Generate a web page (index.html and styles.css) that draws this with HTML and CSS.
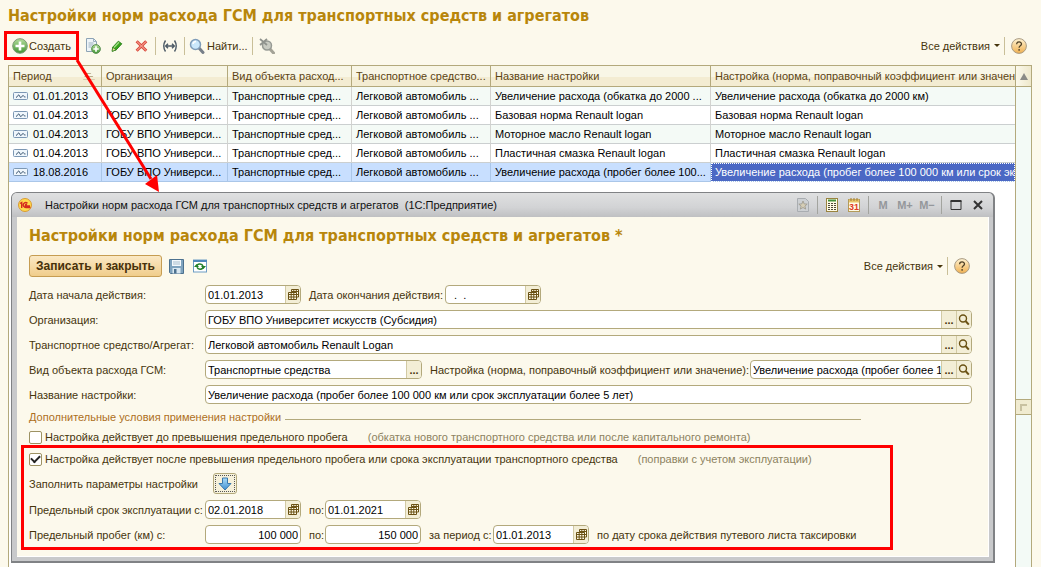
FILE: index.html
```html
<!DOCTYPE html>
<html lang="ru">
<head>
<meta charset="utf-8">
<title>Настройки норм расхода ГСМ</title>
<link rel="stylesheet" href="styles.css">
</head>
<body>
<svg class="sprite" aria-hidden="true">
  <defs>
    <linearGradient id="gGreen" x1="0" y1="0" x2="0" y2="1"><stop offset="0" stop-color="#b5dd9c"/><stop offset="1" stop-color="#3f9433"/></linearGradient>
    <linearGradient id="gGold" x1="0" y1="0" x2="0" y2="1"><stop offset="0" stop-color="#fff3d2"/><stop offset="1" stop-color="#f0b050"/></linearGradient>
    <linearGradient id="gBlue" x1="0" y1="0" x2="0" y2="1"><stop offset="0" stop-color="#a9dcf8"/><stop offset="1" stop-color="#3f8fd0"/></linearGradient>
  </defs>
  <symbol id="i-add" viewBox="0 0 16 16"><circle cx="8" cy="8" r="7.3" fill="url(#gGreen)" stroke="#7c9a74"/><path d="M8 3.5v9M3.5 8h9" stroke="#fff" stroke-width="2.6"/></symbol>
  <symbol id="i-copy" viewBox="0 0 16 16"><path d="M1.5.5h7l3 3v10h-10z" fill="#eef4f8" stroke="#8da3b5"/><path d="M8.500.5v3h3M3.500 5h5M3.500 7h5M3.500 9h3" fill="none" stroke="#9db1c1"/><circle cx="11" cy="11" r="4.4" fill="url(#gGreen)" stroke="#5f9257"/><path d="M11 8.300v5.400M8.300 11h5.400" stroke="#fff" stroke-width="1.700"/></symbol>
  <symbol id="i-pencil" viewBox="0 0 16 16"><path d="M3 9.500 9.500 2.500l4 3L7 12.500 2.500 14z" fill="#3aa51d" stroke="#207812"/><path d="M4.500 9.700 10.300 3.700" stroke="#a5e08a" stroke-width="1.400"/><path d="m3 9.500 4 3L2.500 14z" fill="#eadb9e" stroke="#207812" stroke-width=".7"/></symbol>
  <symbol id="i-del" viewBox="0 0 16 16"><path d="m3 2.500 11 11M14 2.500 3 13.500" stroke="#d9473a" stroke-width="3.400"/><path d="m3.400 2.900 10.200 10.200M13.600 2.900 3.400 13.100" stroke="#f49a8b" stroke-width="1.200"/></symbol>
  <symbol id="i-period" viewBox="0 0 16 16"><path d="M3.500 2.500q-3.500 5.500 0 11M12.500 2.500q3.500 5.500 0 11M4 8h8M6 5.800 3.700 8 6 10.200M10 5.800 12.300 8 10 10.200" fill="none" stroke="#4c5a66" stroke-width="1.400"/></symbol>
  <symbol id="i-find" viewBox="0 0 16 16"><path d="m10 10 4 4.500" stroke="#777f89" stroke-width="3" stroke-linecap="round"/><circle cx="6.500" cy="6.500" r="5" fill="#cbe8fb" stroke="#7f9cb8" stroke-width="1.500"/><path d="M4 6a3 3 0 0 1 3-2.500" fill="none" stroke="#fff" stroke-width="1.400"/></symbol>
  <symbol id="i-unfind" viewBox="0 0 16 16"><path d="m11 11 3.500 4" stroke="#a4a397" stroke-width="3" stroke-linecap="round"/><circle cx="8" cy="7.500" r="4.500" fill="#c9cbc2" stroke="#969a94" stroke-width="1.500"/><path d="m1 1 7 6M8 1 1 7" stroke="#8f928d" stroke-width="1.700"/></symbol>
  <symbol id="i-help" viewBox="0 0 16 16"><circle cx="8" cy="8" r="7.400" fill="url(#gGold)" stroke="#a99b83"/><path d="M5.600 6.300c0-3.100 4.900-3.100 4.900-.3 0 1.900-2.400 1.700-2.400 3.700M8.100 11v1.700" fill="none" stroke="#4f4127" stroke-width="1.300"/></symbol>
  <symbol id="i-rec" viewBox="0 0 16 10"><rect x=".5" y="1.500" width="14" height="7" rx="1" fill="#eff6fc" stroke="#7c97b4"/><path d="M3 6.500c1.300 0 1.500-2.500 2.700-2.500s.8 2.500 2 2.500S9 4.500 10 4.500 11 6.500 12.500 6" fill="none" stroke="#38536f"/></symbol>
  <symbol id="i-cal" viewBox="0 0 11 11"><path d="M4.500.5h6v8h-2v2h-8v-7h4z" fill="#fffbe8"/><path d="M3.500 2.500v-2h7v7.500h-2M.5 3.500h8v7h-8zM3.200 2.500h7.300M.5 5.500h10M.5 8h8M3.200 3.500v7M5.800.5v10M8.300.5v3" fill="none" stroke="#6b5214"/></symbol>
  <symbol id="i-lens" viewBox="0 0 12 12"><circle cx="5" cy="4.500" r="3.500" fill="none" stroke="#6b5214" stroke-width="1.400"/><path d="m7.500 7 3.300 3.700" stroke="#6b5214" stroke-width="2"/></symbol>
  <symbol id="i-save" viewBox="0 0 15 15"><path d="M.5.500h14v14H1.500l-1-1z" fill="#7fa3be" stroke="#4c718f"/><path d="M3 1h9v6H3z" fill="#f4f9fc"/><path d="M4 3h7M4 5h7" stroke="#a8bdcc"/><path d="M3.500 9h8v5.500h-8z" fill="#dae8f1"/><path d="M5 10h2.500v4.500H5z" fill="#4c718f"/></symbol>
  <symbol id="i-refresh" viewBox="0 0 14 13"><rect x=".5" y=".5" width="13" height="12" fill="#fff" stroke="#6d9dc4"/><path d="M0 1.500h14" stroke="#4e88ba" stroke-width="2"/><path d="M3.500 7C4 3.800 9 3.500 10 6.500M10.500 7c-.6 3.300-5.500 3.500-6.500.7" fill="none" stroke="#23802a" stroke-width="1.500"/><path d="M1 7.500h5L3.500 4.500zM8 6.500h5l-2.500 3z" fill="#23802a"/></symbol>
  <symbol id="i-down" viewBox="0 0 14 14"><path d="M4.500 1h5v5.500H13L7 13 1 6.500h3.500z" fill="url(#gBlue)" stroke="#3a78ac"/></symbol>
  <symbol id="i-star" viewBox="0 0 12 14"><path d="M.5.500h8l3 3v10H.5z" fill="#cdd0d3" stroke="#a9adb1"/><path d="m6 3 1.200 2.900 3 .2-2.300 2 .8 3L6 9.500l-2.700 1.600.8-3-2.300-2 3-.2z" fill="#d5cdb5" stroke="#9b978b" stroke-width=".8"/></symbol>
  <symbol id="i-calc" viewBox="0 0 12 14"><rect x=".5" y=".5" width="11" height="13" fill="#fffbe6" stroke="#99833f"/><path d="M2 2.500h8" stroke="#43903a" stroke-width="2"/><path d="M2 5.500h8M2 7.500h8M2 9.500h8M2 11.500h8" stroke="#4e4a38" stroke-dasharray="2 1"/></symbol>
  <symbol id="i-logo" viewBox="0 0 14 14"><circle cx="7" cy="7" r="6.500" fill="#ffd94c" stroke="#d89a35"/><path d="M2 5.500 3.700 4.500V10M9.500 5.300C7.500 3.500 5 5 5.200 7.300 5.400 9.300 7 9.700 12.500 9.500M9 6.700C7.500 5.800 6.600 7.900 8 8h4" fill="none" stroke="#d42a1f" stroke-width="1.400"/></symbol>
</svg>

<main class="page">
  <h1 class="title">Настройки норм расхода ГСМ для транспортных средств и агрегатов</h1>
  <div class="toolbar">
    <button class="tool create"><svg class="ic16"><use href="#i-add"/></svg>Создать</button>
    <button class="tool" aria-label="Скопировать"><svg class="ic16"><use href="#i-copy"/></svg></button>
    <button class="tool" aria-label="Изменить"><svg class="ic14"><use href="#i-pencil"/></svg></button>
    <button class="tool" aria-label="Удалить"><svg class="ic14"><use href="#i-del"/></svg></button>
    <span class="sep"></span>
    <button class="tool" aria-label="Период"><svg class="ic16"><use href="#i-period"/></svg></button>
    <span class="sep"></span>
    <button class="tool"><svg class="ic16"><use href="#i-find"/></svg>Найти...</button>
    <span class="sep"></span>
    <button class="tool" aria-label="Отменить поиск"><svg class="ic16"><use href="#i-unfind"/></svg></button>
    <button class="tool actions">Все действия<span class="caret"></span></button>
    <span class="sep"></span>
    <button class="tool help" aria-label="Справка"><svg class="ic16"><use href="#i-help"/></svg></button>
  </div>

  <div class="list">
    <div class="list-body">
      <table class="grid">
        <colgroup><col class="c1"><col class="c2"><col class="c3"><col class="c4"><col class="c5"><col></colgroup>
        <thead><tr><th><span class="sorted">Период<span class="sort"></span></span></th><th>Организация</th><th>Вид объекта расход...</th><th>Транспортное средство...</th><th>Название настройки</th><th>Настройка (норма, поправочный коэффициент или значение)</th></tr></thead>
        <tbody>
          <tr><td><svg class="rec"><use href="#i-rec"/></svg>01.01.2013</td><td>ГОБУ ВПО Универси...</td><td>Транспортные сред...</td><td>Легковой автомобиль ...</td><td>Увеличение расхода (обкатка до 2000 ...</td><td>Увеличение расхода (обкатка до 2000 км)</td></tr>
          <tr><td><svg class="rec"><use href="#i-rec"/></svg>01.04.2013</td><td>ГОБУ ВПО Универси...</td><td>Транспортные сред...</td><td>Легковой автомобиль ...</td><td>Базовая норма Renault logan</td><td>Базовая норма Renault logan</td></tr>
          <tr><td><svg class="rec"><use href="#i-rec"/></svg>01.04.2013</td><td>ГОБУ ВПО Универси...</td><td>Транспортные сред...</td><td>Легковой автомобиль ...</td><td>Моторное масло Renault logan</td><td>Моторное масло Renault logan</td></tr>
          <tr><td><svg class="rec"><use href="#i-rec"/></svg>01.04.2013</td><td>ГОБУ ВПО Универси...</td><td>Транспортные сред...</td><td>Легковой автомобиль ...</td><td>Пластичная смазка Renault logan</td><td>Пластичная смазка Renault logan</td></tr>
          <tr class="selected"><td><svg class="rec"><use href="#i-rec"/></svg>18.08.2016</td><td>ГОБУ ВПО Универси...</td><td>Транспортные сред...</td><td>Легковой автомобиль ...</td><td>Увеличение расхода (пробег более 100...</td><td class="current">Увеличение расхода (пробег более 100 000 км или срок эксплуатации более 5 лет)</td></tr>
        </tbody>
      </table>
    </div>
    <div class="scroll"><span class="scroll-up"></span><span class="thumb"></span></div>
  </div>
</main>

<svg class="arrow" viewBox="0 0 90 140" aria-hidden="true"><path d="M5 5 79 124" stroke="#f00" stroke-width="3"/><path d="m87 137-14-8 12-9z" fill="#f00"/></svg>

<section class="window">
  <header class="window-bar">
    <svg class="ic14"><use href="#i-logo"/></svg>
    <span class="window-name">Настройки норм расхода ГСМ для транспортных средств и агрегатов&nbsp; (1С:Предприятие)</span>
    <button class="wb" aria-label="Избранное"><svg class="ic1214"><use href="#i-star"/></svg></button>
    <span class="sep"></span>
    <button class="wb" aria-label="Калькулятор"><svg class="ic1214"><use href="#i-calc"/></svg></button>
    <button class="wb" aria-label="Календарь"><svg class="ic1214" viewBox="0 0 12 14"><rect x=".5" y="1.500" width="11" height="12" fill="#fffbe6" stroke="#b39b5a"/><path d="M1 3h10" stroke="#e8c46a" stroke-width="3"/><path d="M3 0v3M6 0v3M9 0v3" stroke="#a07a2c"/><text x="6" y="12" class="date-num">31</text></svg></button>
    <span class="sep"></span>
    <button class="wb mem">M</button><button class="wb mem">M+</button><button class="wb mem">M−</button>
    <span class="sep"></span>
    <button class="wb" aria-label="Развернуть"><svg class="ic12" viewBox="0 0 12 12"><path d="M1 2h10v8.500H1z" fill="none" stroke="#333"/><path d="M.5 2h11" stroke="#333" stroke-width="2"/></svg></button>
    <button class="wb" aria-label="Закрыть"><svg class="ic12" viewBox="0 0 12 12"><path d="m2 2 8 8M10 2l-8 8" stroke="#333" stroke-width="2"/></svg></button>
  </header>
  <form class="form">
    <h2 class="title">Настройки норм расхода ГСМ для транспортных средств и агрегатов *</h2>
    <div class="form-bar">
      <button type="button" class="primary">Записать и закрыть</button>
      <button type="button" class="tool" aria-label="Записать"><svg class="ic15"><use href="#i-save"/></svg></button>
      <button type="button" class="tool" aria-label="Обновить"><svg class="ic14"><use href="#i-refresh"/></svg></button>
      <button type="button" class="tool actions">Все действия<span class="caret"></span></button>
      <span class="sep"></span>
      <button type="button" class="tool" aria-label="Справка"><svg class="ic16"><use href="#i-help"/></svg></button>
    </div>
    <div class="rows">
      <div class="row">
        <label class="lead" for="d1">Дата начала действия:</label>
        <span class="field date"><input id="d1" value="01.01.2013"><button type="button" aria-label="Календарь"><svg class="ic11"><use href="#i-cal"/></svg></button></span>
        <label class="mid w-end" for="d2">Дата окончания действия:</label>
        <span class="field date"><input id="d2" value="  .  ."><button type="button" aria-label="Календарь"><svg class="ic11"><use href="#i-cal"/></svg></button></span>
      </div>
      <div class="row">
        <label class="lead" for="org">Организация:</label>
        <span class="field wide"><input id="org" value="ГОБУ ВПО Университет искусств (Субсидия)"><button type="button" class="dots">...</button><button type="button" aria-label="Открыть"><svg class="ic12"><use href="#i-lens"/></svg></button></span>
      </div>
      <div class="row">
        <label class="lead" for="car">Транспортное средство/Агрегат:</label>
        <span class="field wide"><input id="car" value="Легковой автомобиль Renault Logan"><button type="button" class="dots">...</button><button type="button" aria-label="Открыть"><svg class="ic12"><use href="#i-lens"/></svg></button></span>
      </div>
      <div class="row">
        <label class="lead" for="kind">Вид объекта расхода ГСМ:</label>
        <span class="field kind"><input id="kind" value="Транспортные средства"><button type="button" class="dots">...</button></span>
        <label class="mid w-set" for="set">Настройка (норма, поправочный коэффициент или значение):</label>
        <span class="field wide"><input id="set" value="Увеличение расхода (пробег более 100 000 км или срок эксплуатации более 5 лет)"><button type="button" class="dots">...</button><button type="button" aria-label="Открыть"><svg class="ic12"><use href="#i-lens"/></svg></button></span>
      </div>
      <div class="row">
        <label class="lead" for="nm">Название настройки:</label>
        <span class="field wide"><input id="nm" value="Увеличение расхода (пробег более 100 000 км или срок эксплуатации более 5 лет)"></span>
      </div>
    </div>
    <h3 class="group">Дополнительные условия применения настройки</h3>
    <div class="check"><input type="checkbox" id="k1"><label for="k1">Настройка действует до превышения предельного пробега</label><span class="note">(обкатка нового транспортного средства или после капитального ремонта)</span></div>
    <div class="marked">
      <div class="check"><input type="checkbox" id="k2" checked><label for="k2">Настройка действует после превышения предельного пробега или срока эксплуатации транспортного средства</label><span class="note">(поправки с учетом эксплуатации)</span></div>
      <div class="row"><label class="lead" for="fill">Заполнить параметры настройки</label><button type="button" class="fill" id="fill" aria-label="Заполнить"><svg class="ic14"><use href="#i-down"/></svg></button></div>
      <div class="row">
        <label class="lead" for="s1">Предельный срок эксплуатации с:</label>
        <span class="field date"><input id="s1" value="02.01.2018"><button type="button" aria-label="Календарь"><svg class="ic11"><use href="#i-cal"/></svg></button></span>
        <label class="mid w-to" for="s2">по:</label>
        <span class="field date"><input id="s2" value="01.01.2021"><button type="button" aria-label="Календарь"><svg class="ic11"><use href="#i-cal"/></svg></button></span>
      </div>
      <div class="row">
        <label class="lead" for="m1">Предельный пробег (км) с:</label>
        <span class="field date"><input id="m1" class="num" value="100 000"></span>
        <label class="mid w-to" for="m2">по:</label>
        <span class="field date"><input id="m2" class="num" value="150 000"></span>
        <label class="mid w-per" for="p1">за период с:</label>
        <span class="field date"><input id="p1" value="01.01.2013"><button type="button" aria-label="Календарь"><svg class="ic11"><use href="#i-cal"/></svg></button></span>
        <span class="mid">по дату срока действия путевого листа таксировки</span>
      </div>
    </div>
  </form>
</section>
</body>
</html>
```

FILE: styles.css
```css
* { box-sizing: border-box; }
body { margin: 0; background: #fcf9ec; color: #46350c; font: 11px/14px "Liberation Sans", Arial, sans-serif; overflow: hidden; }
button, input { font: inherit; color: inherit; margin: 0; }
button { background: none; border: 0; padding: 0; display: inline-flex; align-items: center; justify-content: center; white-space: nowrap; }
svg { display: block; flex: none; }
.sprite { position: absolute; width: 0; height: 0; }
.ic16 { width: 16px; height: 16px; }
.ic15 { width: 15px; height: 15px; }
.ic14 { width: 14px; height: 14px; }
.ic12 { width: 12px; height: 12px; }
.ic11 { width: 11px; height: 11px; }
.ic1214 { width: 12px; height: 14px; }
.date-num { font: bold 9px "Liberation Sans", sans-serif; fill: #e03a1e; text-anchor: middle; }

.page { min-height: 100vh; display: flex; flex-direction: column; padding-top: 5px; }
.title { margin: 0; color: #b8860b; font: bold 16px/22px "DejaVu Sans Condensed", "Noto Sans", sans-serif; white-space: nowrap; }
.page > .title { padding-left: 8px; }
.toolbar { display: flex; align-items: center; height: 29px; margin: 4px 12px 5px 4px; gap: 4px; }
.tool { min-width: 20px; height: 22px; gap: 2px; }
.create { border: 3px solid #f00; height: 29px; width: 75px; gap: 1px; }
.actions { margin-left: auto; gap: 4px; }
.caret { border: 3px solid transparent; border-top-color: #46350c; border-bottom: 0; }
.sep { width: 1px; height: 18px; background: #c9bf98; }

.list { flex: 1; display: flex; margin: 0 9px 0 8px; border: 1px solid #b3a97c; border-bottom: 0; background: #fff; }
.list-body { flex: 1; min-width: 0; }
.grid { width: 100%; table-layout: fixed; border-collapse: separate; border-spacing: 0; color: #000; }
.c1 { width: 93px; } .c2 { width: 126px; } .c3 { width: 124px; } .c4 { width: 139px; } .c5 { width: 220px; }
.grid th, .grid td { padding: 0 0 0 4px; text-align: left; font-weight: normal; white-space: nowrap; overflow: hidden; border-right: 1px solid #d3d3d0; border-bottom: 1px solid #cbcfd0; height: 19px; }
.grid th { height: 21px; color: #5c4413; background: linear-gradient(#f8f6e6 0 55%, #f3ecd2 55%); border-color: #b3a97c; }
.grid th:last-child, .grid td:last-child { border-right: 0; }
.grid tr:nth-child(odd) td { background: #f4faf6; }
.grid .selected td, .grid tr.selected:nth-child(odd) td { background: #c8dfff; border-color: #aac6e8; }
.grid .selected td.current, .grid tr.selected:nth-child(odd) td.current { background: #4b68c4; color: #fff; outline: 1px dotted #fff; outline-offset: -1px; }
.sorted { display: flex; justify-content: space-between; align-items: center; padding-right: 6px; }
.sort { width: 12px; height: 7px; background: linear-gradient(#b9ad8c 0 1px, transparent 1px 3px, #b9ad8c 3px 4px, transparent 4px 6px, #b9ad8c 6px); clip-path: polygon(30% 0, 60% 0, 100% 100%, 0 100%); }
.rec { display: inline-block; width: 16px; height: 10px; margin-right: 4px; vertical-align: -1px; }
.scroll { width: 16px; border-left: 1px solid #b3a97c; background: #f3faf6; display: flex; flex-direction: column; align-items: center; }
.scroll-up { width: 100%; height: 21px; background: linear-gradient(90deg, #fbf9ec, #eee8cb); border-bottom: 1px solid #b3a97c; display: grid; place-items: center; }
.scroll-up::before { content: ""; border: 4px solid transparent; border-bottom: 7px solid #8b8b86; border-top: 0; }
.thumb { width: 100%; height: 16px; margin-top: 312px; border: 1px solid #b3a97c; border-width: 1px 0; background: #f0ebd0; display: grid; place-items: center; }
.thumb::before { content: ""; width: 5px; height: 5px; border: 2px solid #c8c1a0; border-width: 2px 0 0 2px; }

.arrow { position: absolute; left: 72px; top: 55px; width: 90px; height: 140px; z-index: 3; }

.window { position: absolute; left: 11px; right: 46px; top: 192px; border: 1px solid #808285; border-bottom-width: 2px; border-right-width: 2px; border-radius: 6px 6px 0 0; background: #c8c9cb; padding: 0 4px 4px 5px; }
.window-bar { display: flex; align-items: center; gap: 6px; height: 24px; margin: 0 -4px 0 -5px; padding: 0 7px 0 6px; border-radius: 5px 5px 0 0; background: linear-gradient(#dfe0e1, #d2d3d5 60%, #bfc0c2); }
.window-name { flex: 1; padding-left: 7px; color: #111; white-space: nowrap; }
.wb { min-width: 16px; height: 16px; }
.mem { color: #94979b; font-weight: bold; }
.window-bar .sep { background: #a3a49f; }
.form { background: #fcf9ec; padding: 8px 16px 6px 12px; border: 1px solid #fff; border-width: 0 1px 1px 0; }
.form-bar { display: flex; align-items: center; gap: 4px; height: 22px; margin: 8px 0; }
.primary { width: 133px; height: 22px; border: 1px solid #c69d52; border-radius: 3px; background: linear-gradient(#fbe9c5, #f0cd8b); color: #46300a; font-size: 12px; font-weight: bold; }
.rows { display: grid; gap: 6px; }
.row { display: flex; align-items: center; }
.row label, .row .mid, .check { white-space: nowrap; }
.lead { width: 176px; flex: none; }
.mid { margin-left: 8px; flex: none; }
.w-end { width: 136px; } .w-set { width: 320px; } .w-to { width: 16px; } .w-per { width: 64px; }
.field { display: flex; height: 19px; border: 1px solid #b3a97c; border-radius: 4px; background: #fff; overflow: hidden; }
.field input { flex: 1; min-width: 0; width: 0; border: 0; background: none; padding: 0 0 0 2px; color: #000; outline: 0; }
.field .num { text-align: right; padding-right: 2px; }
.field button { width: 15px; border-left: 1px solid #d2caa4; background: #f3eed6; }
.field .dots { font-weight: bold; }
.date { width: 96px; }
.kind { width: 217px; }
.wide { flex: 1; min-width: 0; }
.group { display: flex; align-items: center; gap: 4px; margin: 6px 111px 5px 0; color: #ad6f1c; font: inherit; line-height: 14px; }
.group::after { content: ""; flex: 1; height: 1px; background: #b3a97c; margin-top: 4px; }
.check { display: flex; align-items: center; height: 16px; gap: 3px; }
.check input { appearance: none; width: 13px; height: 13px; margin: 0; border: 1px solid #9d9263; border-radius: 2px; background: #fff; display: grid; place-items: center; }
.check input:checked::before { content: ""; width: 7px; height: 4px; margin-bottom: 2px; border: solid #222; border-width: 0 0 2px 2px; rotate: -45deg; }
.note { color: #8c8260; margin-left: 17px; }
.marked { display: grid; gap: 6px; margin: 0 79px 0 -8px; padding: 3px 0 3px 5px; border: 3px solid #f00; }
.fill { width: 24px; height: 21px; margin-left: 8px; border: 1px solid #b3a97c; border-radius: 3px; background: #f6f1db; outline: 1px dotted #555; outline-offset: -3px; }
```
